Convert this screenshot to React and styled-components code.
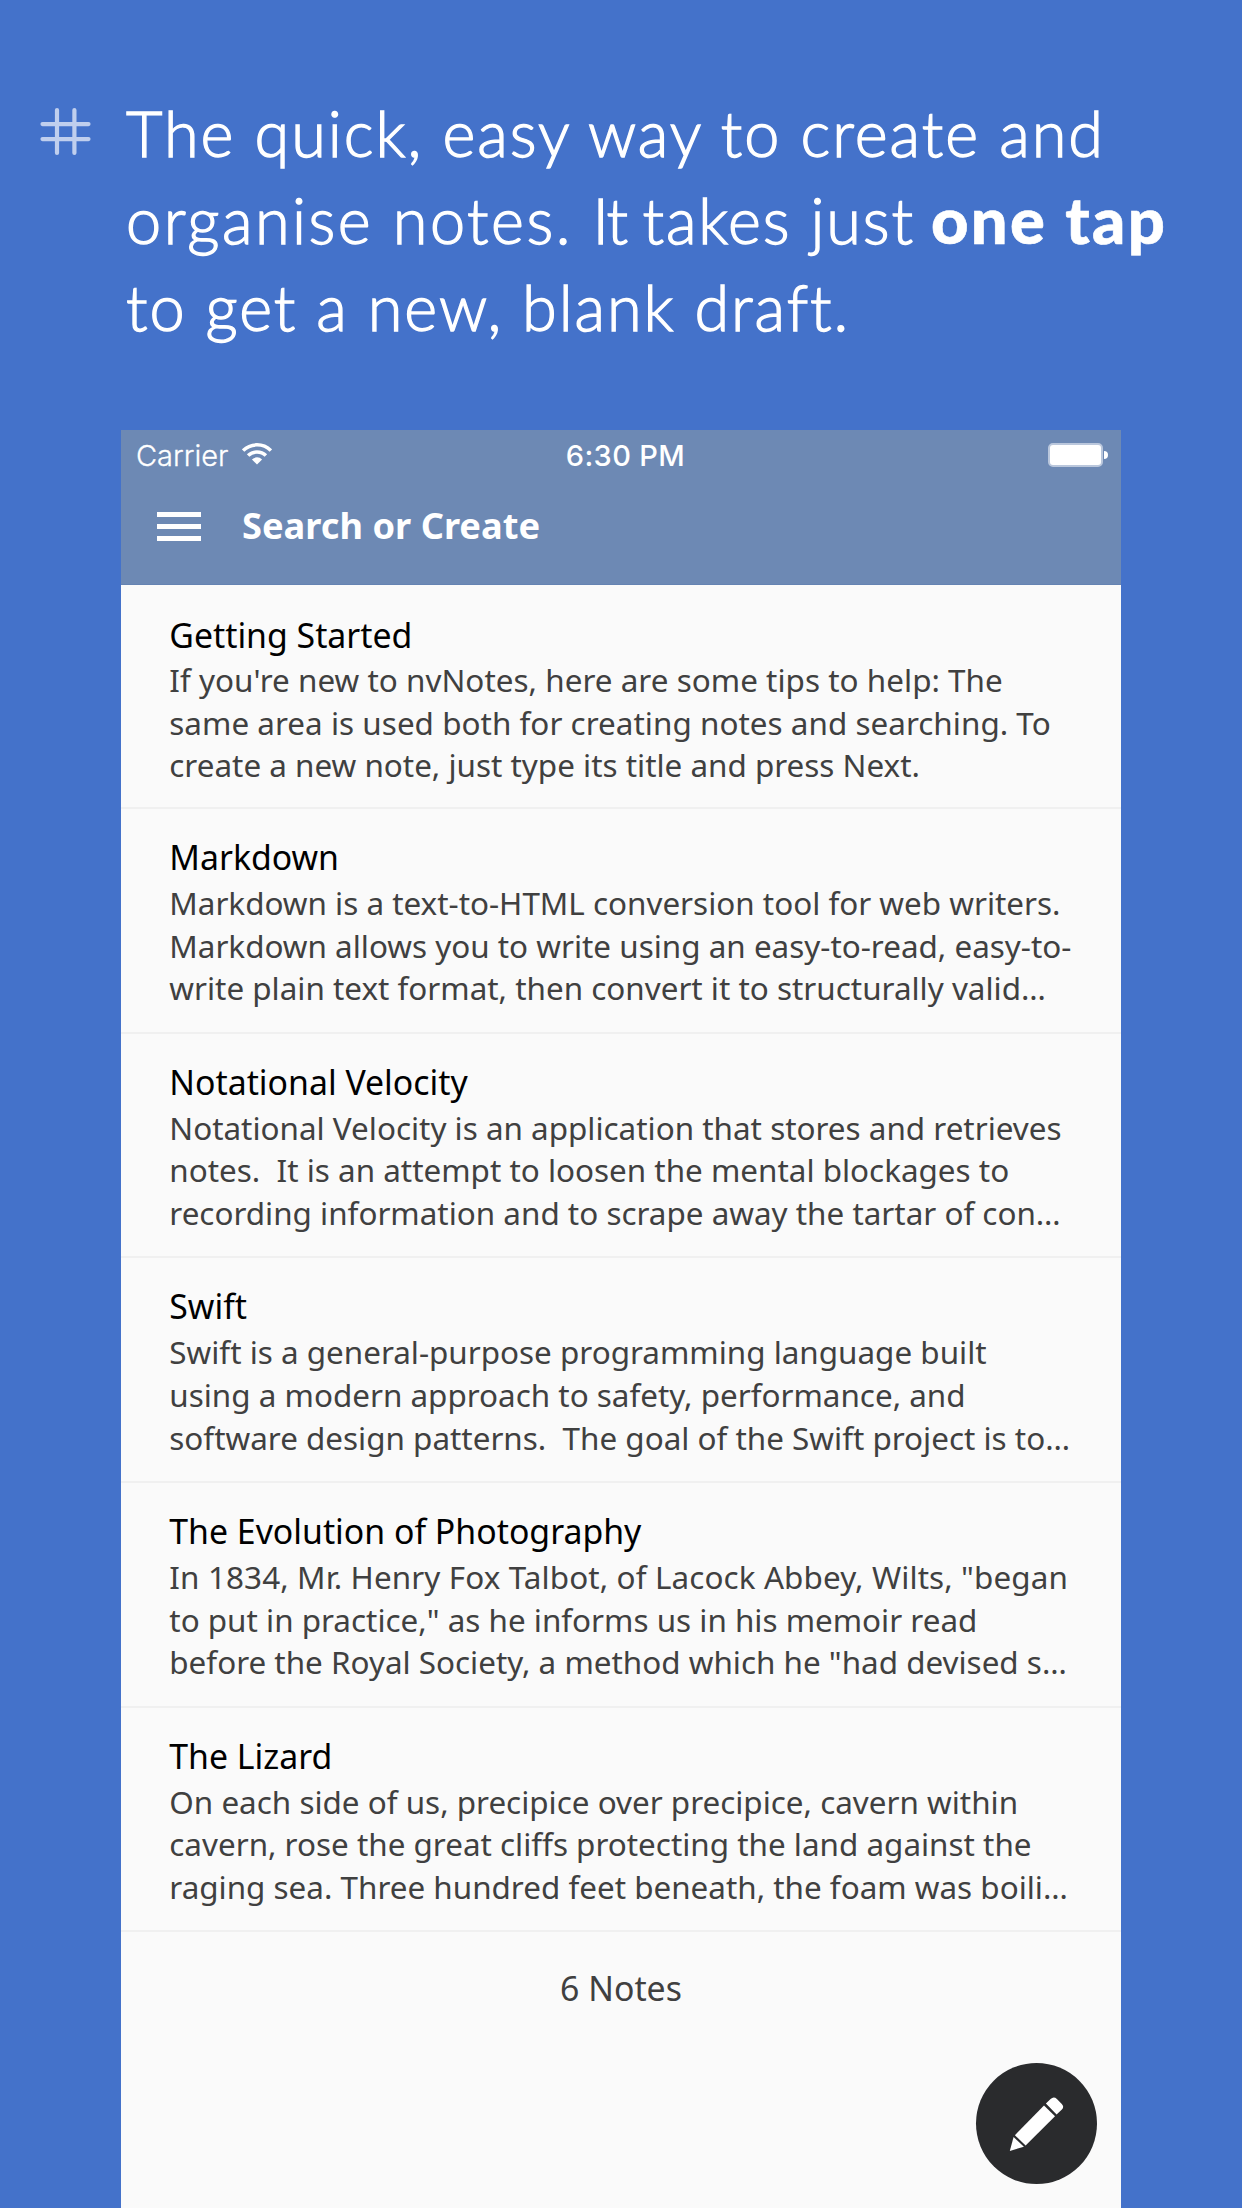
import React from "react";
import styled, { createGlobalStyle } from "styled-components";

const GlobalStyle = createGlobalStyle`
  *, *::before, *::after { box-sizing: border-box; }
  body { margin: 0; background: #4472ca; }
`;

const Page = styled.main`
  display: flex;
  flex-direction: column;
  width: 1242px;
  height: 2208px;
  overflow: hidden;
  background: #4472ca;
  font-family: "Noto Sans", "Open Sans", sans-serif;
`;

const Hero = styled.header`
  display: flex;
  align-items: flex-start;
  flex: none;
  height: 430px;
  padding: 89px 0 0 40px;
`;

const HashMark = styled.svg`
  flex: none;
  width: 51px;
  height: 47px;
  margin-top: 19px;
  stroke: #c0cfee;
  stroke-width: 4.2;
  stroke-linecap: round;
`;

const Headline = styled.h1`
  margin: 0 0 0 35px;
  color: #fff;
  font-family: Lato, "Open Sans", sans-serif;
  font-weight: 300;
  font-size: 63px;
  line-height: 87px;
  -webkit-text-stroke: 1.3px #fff;
`;

const HeadlineRow = styled.span`
  display: block;
  white-space: nowrap;
  letter-spacing: ${(p) => p.$tracking}px;
`;

const Tracked = styled.span`
  letter-spacing: ${(p) => p.$tracking}px;
`;

const Strong = styled.strong`
  margin-left: -3px;
  font-weight: 900;
  font-size: 65px;
  line-height: 1;
  letter-spacing: 2.4px;
  -webkit-text-stroke: 0.6px #fff;
`;

const Phone = styled.section`
  position: relative;
  display: flex;
  flex-direction: column;
  flex: 1;
  width: 1000px;
  margin-left: 121px;
  background: #fafafa;
`;

const TopBar = styled.div`
  flex: none;
  height: 155px;
  background: #6d89b4;
  border-bottom: 1px solid #6583b2;
  color: #fff;
`;

const StatusBar = styled.div`
  display: grid;
  grid-template-columns: 1fr auto 1fr;
  align-items: center;
  height: 50px;
  padding: 0 13px 0 15px;
  font-family: Inter, Roboto, sans-serif;
  font-size: 29px;
  line-height: 35px;
`;

const Carrier = styled.div`
  display: flex;
  align-items: center;
  gap: 13.5px;
  font-weight: 300;
  -webkit-text-stroke: 0.3px #fff;
`;

const WifiIcon = styled.svg`
  width: 30px;
  height: 22px;
  margin-top: -2px;
`;

const Clock = styled.time`
  margin-left: 7px;
  font-weight: 500;
  letter-spacing: 0.38px;
`;

const Battery = styled.div`
  display: flex;
  align-items: center;
  justify-content: flex-end;
  gap: 1px;
`;

const BatteryCell = styled.span`
  width: 55px;
  height: 24px;
  border: 2px solid #bac7dc;
  border-radius: 5px;
  background: #fff;
`;

const BatteryTip = styled.span`
  width: 4px;
  height: 8px;
  border-radius: 0 4px 4px 0;
  background: #fff;
`;

const NavBar = styled.div`
  display: flex;
  align-items: center;
  height: 91px;
  padding-left: 36px;
`;

const MenuButton = styled.button`
  display: flex;
  flex-direction: column;
  gap: 7px;
  width: 44px;
  margin: 2px 41px 0 0;
  padding: 0;
  border: 0;
  background: none;
`;

const MenuBar = styled.span`
  height: 5px;
  background: #fff;
`;

const SearchLabel = styled.span`
  font-weight: 700;
  font-size: 36.23px;
  line-height: 49px;
`;

const NoteList = styled.ul`
  margin: 0;
  padding: 0;
  list-style: none;
`;

const NoteTitle = styled.h2`
  margin: 0;
  color: #000;
  font-weight: 400;
  font-size: 33.82px;
  line-height: 46px;
`;

const NoteBody = styled.p`
  margin: 2px 0 0;
  color: #404040;
  font-size: 31.42px;
  line-height: 42.6px;
`;

const NoteRow = styled.li`
  height: 224.7px;
  padding: 25px 48px 0 48.3px;
  border-bottom: 2px solid #f0f0f0;

  &:first-child {
    height: 224px;
    padding-top: 27px;
  }

  &:first-child ${NoteBody} {
    margin-top: 1px;
  }
`;

const BodyLine = styled.span`
  display: block;
  white-space: pre;
  letter-spacing: ${(p) => p.$tracking || 0}px;
`;

const NoteCount = styled.p`
  margin: 33px 0 0;
  color: #404040;
  font-size: 33.82px;
  line-height: 46px;
  text-align: center;
`;

const ComposeButton = styled.button`
  position: absolute;
  right: 24px;
  bottom: 24px;
  width: 121px;
  height: 121px;
  padding: 0;
  border: 0;
  border-radius: 50%;
  background: #2a2b2d;
`;

const PencilIcon = styled.svg`
  display: block;
  width: 121px;
  height: 121px;
  fill: #fff;
`;

const notes = [
  {
    title: "Getting Started",
    lines: [
      { text: "If you're new to nvNotes, here are some tips to help: The", tracking: 0.03 },
      { text: "same area is used both for creating notes and searching. To", tracking: 0.03 },
      { text: "create a new note, just type its title and press Next." },
    ],
  },
  {
    title: "Markdown",
    lines: [
      { text: "Markdown is a text-to-HTML conversion tool for web writers." },
      { text: "Markdown allows you to write using an easy-to-read, easy-to-" },
      { text: "write plain text format, then convert it to structurally valid…" },
    ],
  },
  {
    title: "Notational Velocity",
    lines: [
      { text: "Notational Velocity is an application that stores and retrieves" },
      { text: "notes.  It is an attempt to loosen the mental blockages to" },
      { text: "recording information and to scrape away the tartar of con…" },
    ],
  },
  {
    title: "Swift",
    lines: [
      { text: "Swift is a general-purpose programming language built" },
      { text: "using a modern approach to safety, performance, and" },
      { text: "software design patterns.  The goal of the Swift project is to…" },
    ],
  },
  {
    title: "The Evolution of Photography",
    lines: [
      { text: "In 1834, Mr. Henry Fox Talbot, of Lacock Abbey, Wilts, \"began", tracking: 0.12 },
      { text: "to put in practice,\" as he informs us in his memoir read" },
      { text: "before the Royal Society, a method which he \"had devised s…" },
    ],
  },
  {
    title: "The Lizard",
    lines: [
      { text: "On each side of us, precipice over precipice, cavern within" },
      { text: "cavern, rose the great cliffs protecting the land against the" },
      { text: "raging sea. Three hundred feet beneath, the foam was boili…" },
    ],
  },
];

function Hash() {
  return (
    <HashMark viewBox="0 0 51 47" aria-hidden="true">
      <path d="M17 2.1V44.9M34.4 2.1V44.9M2.5 16.1H48.5M2.5 31.1H48.5" />
    </HashMark>
  );
}

function Wifi() {
  return (
    <WifiIcon viewBox="0 0 30 22" aria-hidden="true">
      <g fill="none" stroke="#fff" strokeWidth="3.5">
        <path d="M1.1 7.6A19.7 19.7 0 0 1 28.9 7.6" />
        <path d="M6.1 12.6A12.6 12.6 0 0 1 23.9 12.6" />
      </g>
      <path d="M15 21.6L9.9 16.4A7.3 7.3 0 0 1 20.1 16.4Z" fill="#fff" />
    </WifiIcon>
  );
}

function Pencil() {
  return (
    <PencilIcon viewBox="0 0 121 121" aria-hidden="true">
      <path d="M69.9 40.6L74.6 36Q77.7 32.9 80.9 35.9L85.8 40.9Q88.5 43.8 85.9 46.5L80.6 51.4Z" />
      <path d="M68 42.6L79 53.2L49.6 82.6L38.9 72.2Z" />
      <path d="M37.6 74L47.9 83.8L33.8 87.9Z" />
    </PencilIcon>
  );
}

export default function App() {
  return (
    <Page>
      <GlobalStyle />
      <Hero>
        <Hash />
        <Headline>
          <HeadlineRow $tracking={2.0}>The quick, easy way to create and</HeadlineRow>
          <HeadlineRow $tracking={1.87}>
            <Tracked $tracking={2.5}>organise notes. </Tracked>
            <Tracked $tracking={-1.4}>It </Tracked>
            takes just <Strong>one tap</Strong>
          </HeadlineRow>
          <HeadlineRow $tracking={1.91}>to get a new, blank draft.</HeadlineRow>
        </Headline>
      </Hero>
      <Phone>
        <TopBar>
          <StatusBar>
            <Carrier>
              Carrier
              <Wifi />
            </Carrier>
            <Clock>6:30 PM</Clock>
            <Battery>
              <BatteryCell />
              <BatteryTip />
            </Battery>
          </StatusBar>
          <NavBar>
            <MenuButton aria-label="Menu">
              <MenuBar />
              <MenuBar />
              <MenuBar />
            </MenuButton>
            <SearchLabel>Search or Create</SearchLabel>
          </NavBar>
        </TopBar>
        <NoteList>
          {notes.map((note) => (
            <NoteRow key={note.title}>
              <NoteTitle>{note.title}</NoteTitle>
              <NoteBody>
                {note.lines.map((line) => (
                  <BodyLine key={line.text} $tracking={line.tracking}>
                    {line.text}
                  </BodyLine>
                ))}
              </NoteBody>
            </NoteRow>
          ))}
        </NoteList>
        <NoteCount>{notes.length} Notes</NoteCount>
        <ComposeButton aria-label="New note">
          <Pencil />
        </ComposeButton>
      </Phone>
    </Page>
  );
}
